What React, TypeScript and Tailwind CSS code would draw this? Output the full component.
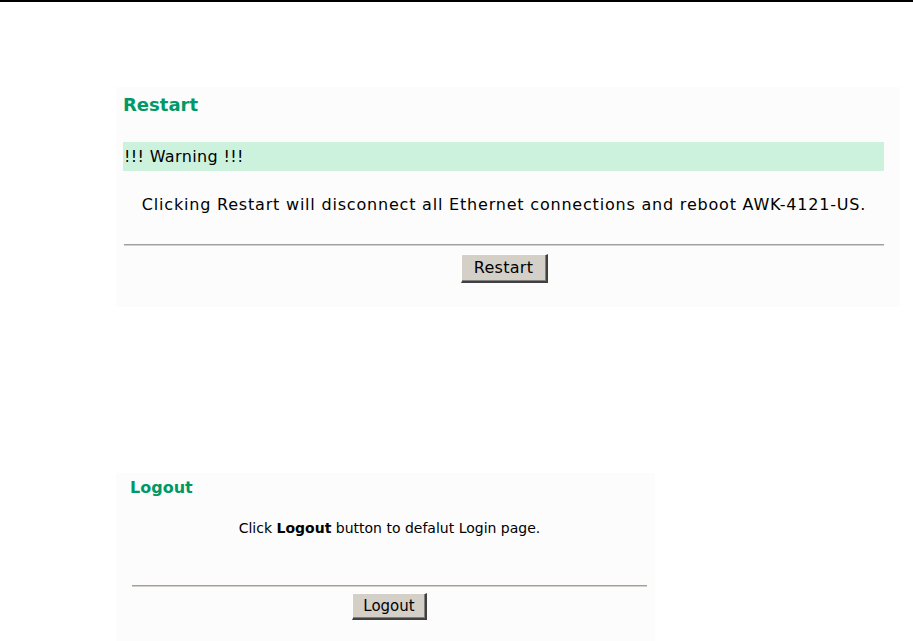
const font = "font-['DejaVu_Sans','Liberation_Sans',sans-serif]"

function Separator() {
  return (
    <div>
      <div className="h-px bg-[#a0a0a0]" />
      <div className="h-px bg-[#d4d0c8]" />
    </div>
  )
}

function WinButton({ label, className }: { label: string; className: string }) {
  return (
    <button
      className={`bg-[#d4d0c8] text-black border-t border-l border-t-white border-l-white border-r-2 border-b-2 border-r-[#404040] border-b-[#404040] shadow-[inset_-1px_-1px_0_#808080] ${className}`}
    >
      {label}
    </button>
  )
}

export default function App() {
  return (
    <div className={`min-h-[641px] bg-white ${font} text-black`}>
      <div className="h-[2px] bg-black" />

      {/* Restart */}
      <div className="ml-[116px] mt-[85px] w-[784px] h-[220px] bg-[#fcfcfc] pl-[7px] pr-[16px] pt-[8px]">
        <h2 className="text-[18px] leading-[20px] font-bold text-[#009966]">Restart</h2>
        <div className="mt-[27px] h-[29px] bg-[#ccf2dd] flex items-center pl-px text-[16px] tracking-[0.35px]">!!! Warning !!!</div>
        <p className="mt-[24px] text-[16px] leading-[20px] tracking-[0.8px] text-center pl-px">
          Clicking Restart will disconnect all Ethernet connections and reboot AWK-4121-US.
        </p>
        <div className="mt-[29px] ml-px">
          <Separator />
        </div>
        <div className="mt-[8px] flex justify-center pl-px">
          <WinButton label="Restart" className="w-[87px] h-[29px] text-[16px] tracking-[0.3px]" />
        </div>
      </div>

      {/* Logout */}
      <div className="ml-[116px] mt-[166px] w-[539px] h-[168px] bg-[#fcfcfc] pl-[14px] pr-[8px] pt-[5px]">
        <h2 className="text-[16px] leading-[20px] font-bold text-[#009966]">Logout</h2>
        <p className="mt-[22px] ml-[2px] text-[14px] leading-[16px] text-center">
          Click <b>Logout</b> button to defalut Login page.
        </p>
        <div className="mt-[49px] ml-[2px]">
          <Separator />
        </div>
        <div className="mt-[6px] ml-[2px] flex justify-center">
          <WinButton label="Logout" className="w-[75px] h-[27px] text-[15px]" />
        </div>
      </div>
    </div>
  )
}
